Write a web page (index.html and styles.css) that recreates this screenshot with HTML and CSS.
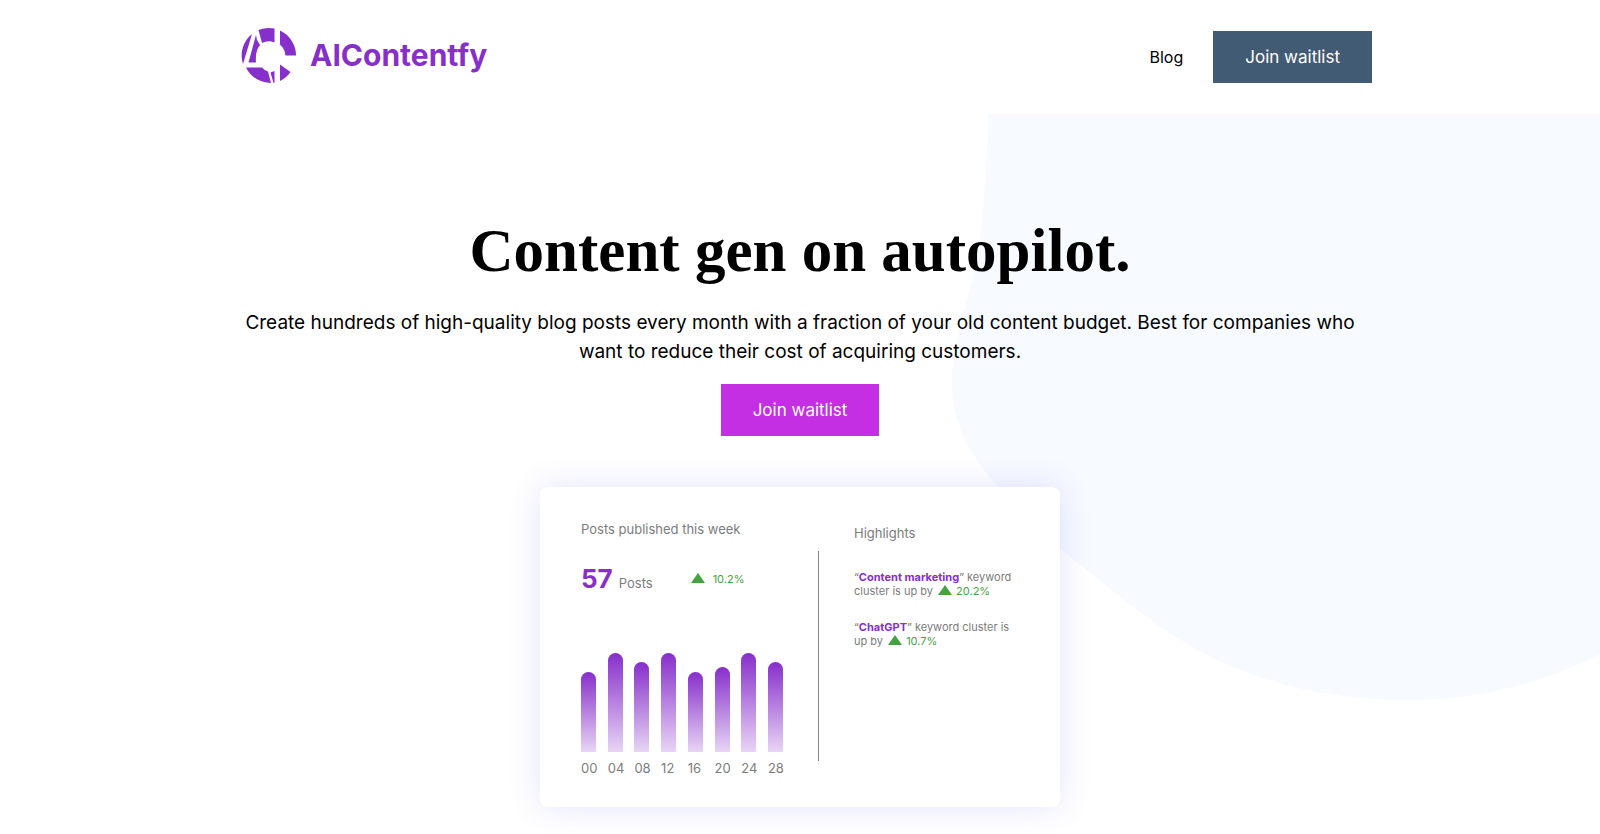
FILE: index.html
```html
<!DOCTYPE html>
<html lang="en">
<head>
<meta charset="utf-8">
<meta name="viewport" content="width=device-width, initial-scale=1">
<title>AIContentfy</title>
<link rel="stylesheet" href="styles.css">
</head>
<body>
<header class="header">
  <div class="container header-row">
    <a class="brand" href="#">
      <svg class="brand-mark" viewBox="0 0 64 64" aria-hidden="true">
        <path d="M22.500 7A27.500 27.500 0 0 1 38.500 5.500V19.500Q32 17 26 20Z"/>
        <path d="M44 7.500A27.500 27.500 0 0 1 60 32.500H49.500Q49 26 44 21.500Z"/>
        <path d="M16 11A27.500 27.500 0 0 0 7 41Z"/>
        <path d="M20 12L21 17L24 22Q19 28 20 39.500H12.500Z"/>
        <path d="M10 44.500H26Q29 48 32 48.500L35 60A27.500 27.500 0 0 1 10 44.500Z"/>
        <path d="M34.500 49.500L38.500 48V60H37.500Z"/>
        <path d="M44 41.500L54.500 49A27.500 27.500 0 0 1 44 58Z"/>
      </svg>
      <span class="brand-name">AIContentfy</span>
    </a>
    <nav class="nav">
      <a class="nav-link" href="#">Blog</a>
      <button class="button button-slate" type="button">Join waitlist</button>
    </nav>
  </div>
</header>
<main class="hero">
  <svg class="hero-blob" viewBox="0 0 648 586" aria-hidden="true">
    <path d="M36 0C34 80 30 130 15 186C6 220 0 240 0 270C0 308 17 340 46 373C66 398 84 417 108 435C160 475 200 512 253 540C310 570 380 586 455 586C525 586 590 570 648 540V0Z"/>
  </svg>
  <div class="container hero-body">
    <h1 class="hero-title">Content gen on autopilot.</h1>
    <p class="hero-text">Create hundreds of high-quality blog posts every month with a fraction of your old content budget. Best for companies who want to reduce their cost of acquiring customers.</p>
    <button class="button button-violet" type="button">Join waitlist</button>
    <section class="card">
      <div class="stats">
        <h2 class="card-label">Posts published this week</h2>
        <div class="stats-row">
          <strong class="stats-total">57</strong>
          <span class="stats-unit">Posts</span>
          <span class="stats-change"><svg class="triangle" viewBox="0 0 14 10" aria-hidden="true"><path d="M7 0L14 10H0Z"/></svg>10.2%</span>
        </div>
        <div class="chart">
          <div class="column"><div class="bar" style="height:80px"></div>00</div>
          <div class="column"><div class="bar" style="height:99px"></div>04</div>
          <div class="column"><div class="bar" style="height:90px"></div>08</div>
          <div class="column"><div class="bar" style="height:99px"></div>12</div>
          <div class="column"><div class="bar" style="height:80px"></div>16</div>
          <div class="column"><div class="bar" style="height:85px"></div>20</div>
          <div class="column"><div class="bar" style="height:99px"></div>24</div>
          <div class="column"><div class="bar" style="height:90px"></div>28</div>
        </div>
      </div>
      <div class="divider"></div>
      <div class="highlights">
        <h2 class="card-label">Highlights</h2>
        <p class="highlight">“<strong>Content marketing</strong>” keyword cluster is up by <span class="change"><svg class="triangle" viewBox="0 0 14 10" aria-hidden="true"><path d="M7 0L14 10H0Z"/></svg>20.2%</span></p>
        <p class="highlight">“<strong>ChatGPT</strong>” keyword cluster is up by <span class="change"><svg class="triangle" viewBox="0 0 14 10" aria-hidden="true"><path d="M7 0L14 10H0Z"/></svg>10.7%</span></p>
      </div>
    </section>
  </div>
</main>
</body>
</html>
```
FILE: styles.css
```css
* {
  box-sizing: border-box;
}

body {
  margin: 0;
  background: #fff;
  color: #000;
  font-family: Inter, "Liberation Sans", sans-serif;
}

.container {
  max-width: 1144px;
  margin: 0 auto;
}

.header-row {
  display: flex;
  align-items: center;
  justify-content: space-between;
  min-height: 114px;
}

.brand {
  display: flex;
  align-items: center;
  gap: 10px;
  padding: 0 0 4px 8px;
  color: #862fca;
  text-decoration: none;
}

.brand-mark {
  width: 64px;
  height: 64px;
  fill: currentColor;
}

.brand-name {
  font-size: 30px;
  font-weight: 700;
}

.nav {
  display: flex;
  align-items: center;
  gap: 30px;
}

.nav-link {
  color: #000;
  font-size: 16px;
  text-decoration: none;
}

.button {
  height: 52px;
  padding: 0 32px;
  border: 0;
  color: #fff;
  font-family: inherit;
  font-size: 17px;
}

.button-slate {
  background: #425b74;
}

.button-violet {
  background: #c42fe3;
}

.hero {
  position: relative;
}

.hero-blob {
  position: absolute;
  top: 0;
  right: 0;
  width: 648px;
  height: 586px;
  fill: #f7faff;
}

.hero-body {
  position: relative;
  display: flex;
  flex-direction: column;
  align-items: center;
  padding: 99px 0 28px;
}

.hero-title {
  margin: 0;
  font-family: "Liberation Serif", serif;
  font-size: 61px;
  font-weight: 700;
  line-height: 76px;
}

.hero-text {
  margin: 19px 0 18px;
  font-size: 19px;
  line-height: 29px;
  text-align: center;
}

.card {
  display: grid;
  grid-template-columns: 202px 1px 160px;
  column-gap: 35px;
  max-width: 520px;
  min-height: 320px;
  margin-top: 51px;
  padding: 33px 46px 31px 41px;
  border-radius: 8px;
  background: #fff;
  box-shadow: 0 0 32px rgba(90, 80, 255, 0.16);
  color: #7c7c7c;
}

.card-label {
  margin: 0;
  font-size: 13px;
  font-weight: 400;
  line-height: 18px;
}

.stats {
  display: flex;
  flex-direction: column;
}

.stats-row {
  display: flex;
  align-items: baseline;
  margin-top: 24px;
}

.stats-total {
  color: #862fca;
  font-size: 26px;
  line-height: 34px;
}

.stats-unit {
  margin-left: 6px;
  font-size: 13px;
}

.stats-change,
.change {
  color: #43a340;
  font-size: 11px;
}

.stats-change {
  align-self: center;
  margin-left: 38px;
}

.triangle {
  width: 14px;
  height: 10px;
  margin-right: 8px;
  fill: #43a340;
}

.chart {
  display: flex;
  align-items: flex-end;
  justify-content: space-between;
  margin-top: auto;
}

.column {
  width: 15px;
  font-size: 13px;
  line-height: 16px;
}

.bar {
  margin-bottom: 8px;
  border-radius: 8px 8px 0 0;
  background: linear-gradient(#862fca, #e8d5f5);
}

.divider {
  height: 210px;
  margin-top: 31px;
  background: #858585;
}

.highlights {
  padding-top: 4px;
}

.highlights .card-label {
  margin-bottom: 28px;
}

.highlight {
  margin: 0 0 22px;
  font-size: 11px;
  line-height: 14px;
}

.highlight strong {
  color: #862fca;
}

.change .triangle {
  margin: 0 4px 0 2px;
}
```
